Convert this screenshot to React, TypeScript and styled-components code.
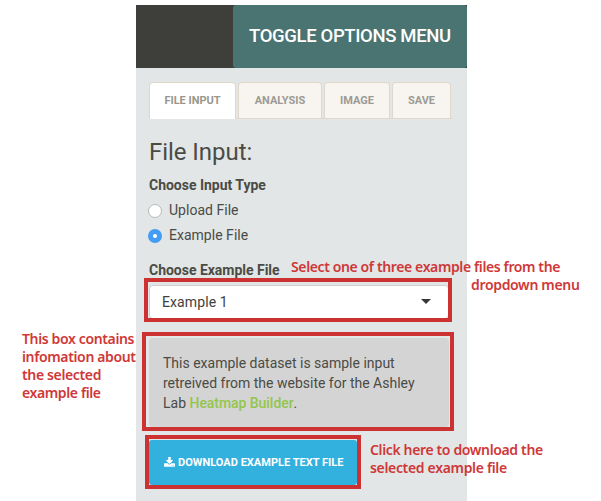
import React from "react";
import styled, { createGlobalStyle } from "styled-components";

const GlobalStyle = createGlobalStyle`
  * { box-sizing: border-box; }
  body { margin: 0; background: #fff; overflow: hidden; }
`;

const Page = styled.div`
  position: relative;
  width: 601px;
  height: 501px;
  padding: 5px 0 0 136px;
  overflow: hidden;
  font-family: Roboto, "Liberation Sans", sans-serif;
  color: #4b4b45;
`;

const Panel = styled.main`
  width: 331px;
  height: 496px;
  background: #e2e6e7;
`;

const Header = styled.header`
  display: flex;
  justify-content: flex-end;
  height: 63px;
  background: #3e3f3a;
`;

const ToggleButton = styled.button`
  width: 234px;
  height: 63px;
  padding: 0 0 0 16px;
  border: 0;
  border-radius: 3px;
  background: #4a7472;
  color: #fff;
  font: 500 18.5px/63px Roboto, sans-serif;
  letter-spacing: -0.36px;
  text-align: left;
  white-space: nowrap;
`;

const Body = styled.div`
  display: flex;
  flex-direction: column;
  padding: 14px 14px 0 13px;
`;

const Tabs = styled.nav`
  display: flex;
  gap: 2px;
  height: 37px;
  border-bottom: 1px solid #dfd7ca;
`;

const Tab = styled.button<{ $width: number; $active?: boolean }>`
  width: ${(p) => p.$width}px;
  height: ${(p) => (p.$active ? 37 : 36)}px;
  padding: 0 0 ${(p) => (p.$active ? 1 : 0)}px;
  border: 1px solid #dfd7ca;
  border-bottom: 0;
  border-radius: 4px 4px 0 0;
  background: ${(p) => (p.$active ? "#fff" : "#f8f5f0")};
  color: ${(p) => (p.$active ? "#98978b" : "#9c9b95")};
  font: 700 11px/35px Roboto, sans-serif;
  letter-spacing: -0.02px;
`;

const Title = styled.h1`
  margin: 16px 0 0;
  font-size: 24px;
  font-weight: 400;
  line-height: 34px;
  letter-spacing: -0.05px;
`;

const FieldLabel = styled.div<{ $top: number }>`
  margin-top: ${(p) => p.$top}px;
  font-size: 14px;
  font-weight: 700;
  line-height: 20px;
  letter-spacing: -0.02px;
`;

const RadioRow = styled.label`
  display: flex;
  align-items: center;
  gap: 7px;
  height: 20px;
  margin-top: 5px;
  font-size: 14px;
  line-height: 20px;
  letter-spacing: 0.02px;
`;

const RadioDot = styled.span<{ $checked?: boolean }>`
  width: 14px;
  height: 14px;
  margin: 2px 0 0 -1px;
  border: ${(p) => (p.$checked ? "5px solid #449cf5" : "1px solid #b7b9b9")};
  border-radius: 50%;
  background: #fff;
`;

const SelectBox = styled.div`
  display: flex;
  align-items: center;
  justify-content: space-between;
  width: 300px;
  height: 34px;
  margin-top: 5px;
  padding: 0 17px 0 12px;
  border: 1px solid #cfcfcb;
  border-radius: 4px;
  background: #fff;
  color: #3f3f3c;
  font-size: 14px;
  letter-spacing: 0.1px;
`;

const Caret = styled.span`
  border: 5px solid transparent;
  border-top-color: #373735;
  border-bottom: 0;
  margin-top: -1px;
`;

const InfoBox = styled.p`
  width: 300px;
  height: 89px;
  margin: 19px 0 0;
  padding: 15px 14px;
  border-radius: 4px;
  background: #d4d4d4;
  font-size: 14px;
  line-height: 20px;
  letter-spacing: 0;
  white-space: nowrap;
`;

const Link = styled.a`
  color: #93c54b;
  font-weight: 500;
  letter-spacing: -0.05px;
`;

const DownloadButton = styled.button`
  display: flex;
  align-items: center;
  gap: 3px;
  width: 208px;
  height: 45px;
  margin-top: 13px;
  padding: 0 0 0 15px;
  border: 0;
  border-radius: 3px;
  background: #33b1de;
  color: #fff;
  font: 700 11px/45px Roboto, sans-serif;
  letter-spacing: 0.02px;
  white-space: nowrap;
`;

const Highlight = styled.div<{ $x: number; $y: number; $w: number; $h: number }>`
  position: absolute;
  left: ${(p) => p.$x}px;
  top: ${(p) => p.$y}px;
  width: ${(p) => p.$w}px;
  height: ${(p) => p.$h}px;
  border: 4px solid #cc3232;
`;

const Note = styled.div<{ $x: number; $y: number }>`
  position: absolute;
  left: ${(p) => p.$x}px;
  top: ${(p) => p.$y}px;
  color: #cf3838;
  font: 600 14px/18px "Noto Sans", "Open Sans", sans-serif;
  white-space: nowrap;
`;

const NoteLine = styled.div<{ $spacing: number; $indent?: number }>`
  padding-left: ${(p) => p.$indent ?? 0}px;
  letter-spacing: ${(p) => p.$spacing}px;
`;

const DownloadIcon = () => (
  <svg width="11" height="11" viewBox="0 0 1664 1536" fill="#fff" aria-hidden="true">
    <path d="M1280 1216a64 64 0 1 0-128 0 64 64 0 1 0 128 0zm256 0a64 64 0 1 0-128 0 64 64 0 1 0 128 0zm128-224v320c0 53-43 96-96 96H96c-53 0-96-43-96-96V992c0-53 43-96 96-96h465l135 136c37 36 85 56 136 56s99-20 136-56l136-136h464c53 0 96 43 96 96zm-325-569c10 24 5 52-14 70l-448 448c-12 13-29 19-45 19s-33-6-45-19L339 493c-19-18-24-46-14-70 10-23 33-39 59-39h256V-64h384v448h256c26 0 49 16 59 39z" />
  </svg>
);

export default function App() {
  return (
    <>
      <GlobalStyle />
      <Page>
        <Panel>
          <Header>
            <ToggleButton>TOGGLE OPTIONS MENU</ToggleButton>
          </Header>
          <Body>
            <Tabs>
              <Tab $width={87} $active>FILE INPUT</Tab>
              <Tab $width={84}>ANALYSIS</Tab>
              <Tab $width={66}>IMAGE</Tab>
              <Tab $width={59}>SAVE</Tab>
            </Tabs>
            <Title>File Input:</Title>
            <FieldLabel $top={6}>Choose Input Type</FieldLabel>
            <RadioRow>
              <RadioDot />
              Upload File
            </RadioRow>
            <RadioRow>
              <RadioDot $checked />
              Example File
            </RadioRow>
            <FieldLabel $top={15}>Choose Example File</FieldLabel>
            <SelectBox>
              Example 1
              <Caret />
            </SelectBox>
            <InfoBox>
              This example dataset is sample input
              <br />
              retreived from the website for the Ashley
              <br />
              Lab <Link>Heatmap Builder</Link>.
            </InfoBox>
            <DownloadButton>
              <DownloadIcon />
              DOWNLOAD EXAMPLE TEXT FILE
            </DownloadButton>
          </Body>
        </Panel>

        <Highlight $x={144} $y={278} $w={308} $h={44} />
        <Highlight $x={142} $y={332} $w={312} $h={99} />
        <Highlight $x={145} $y={435} $w={216} $h={54} />

        <Note $x={291} $y={258}>
          <NoteLine $spacing={-0.38}>Select one of three example files from the</NoteLine>
          <NoteLine $spacing={-0.33} $indent={180}>dropdown menu</NoteLine>
        </Note>
        <Note $x={22} $y={330}>
          <NoteLine $spacing={-0.36}>This box contains</NoteLine>
          <NoteLine $spacing={-0.36}>infomation about</NoteLine>
          <NoteLine $spacing={-0.36}>the selected</NoteLine>
          <NoteLine $spacing={-0.38}>example file</NoteLine>
        </Note>
        <Note $x={370} $y={441}>
          <NoteLine $spacing={-0.36}>Click here to download the</NoteLine>
          <NoteLine $spacing={-0.33}>selected example file</NoteLine>
        </Note>
      </Page>
    </>
  );
}
